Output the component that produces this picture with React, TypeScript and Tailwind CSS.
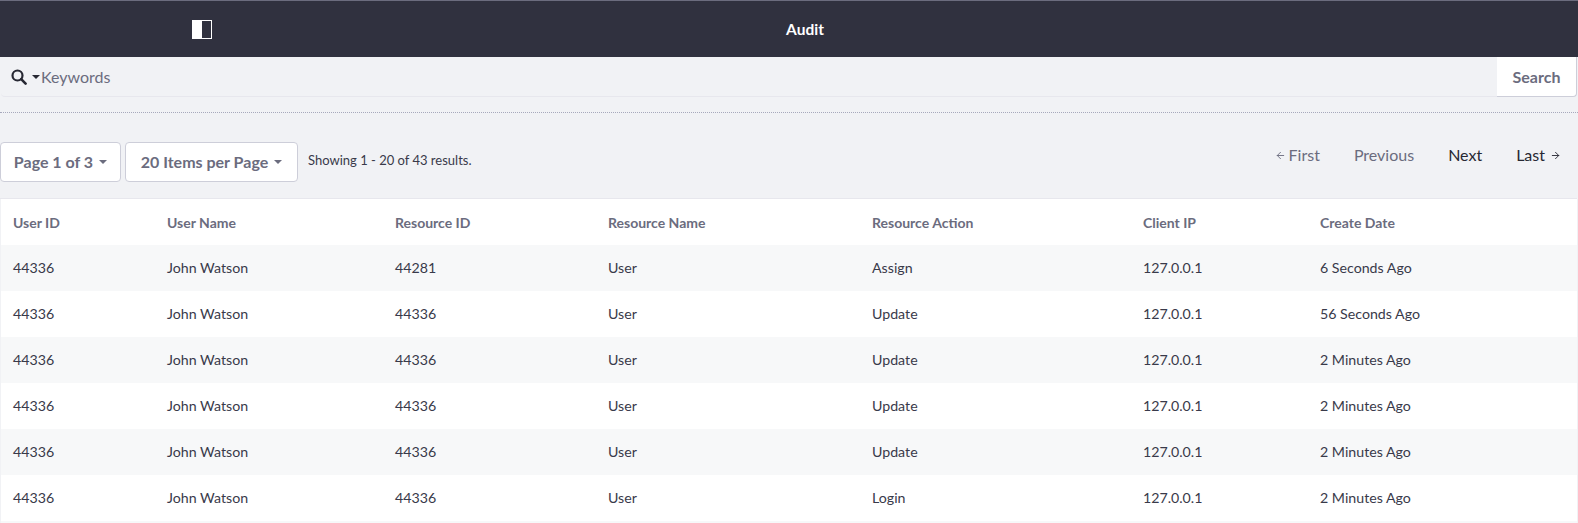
import { ArrowLeft, ArrowRight } from 'lucide-react';

const rows = [
    { resourceId: '44281', action: 'Assign', date: '6 Seconds Ago' },
    { resourceId: '44336', action: 'Update', date: '56 Seconds Ago' },
    { resourceId: '44336', action: 'Update', date: '2 Minutes Ago' },
    { resourceId: '44336', action: 'Update', date: '2 Minutes Ago' },
    { resourceId: '44336', action: 'Update', date: '2 Minutes Ago' },
    { resourceId: '44336', action: 'Login', date: '2 Minutes Ago' },
];

const columns = [
    { label: 'User ID', width: 'w-[154px]' },
    { label: 'User Name', width: 'w-[228px]' },
    { label: 'Resource ID', width: 'w-[213px]' },
    { label: 'Resource Name', width: 'w-[264px]' },
    { label: 'Resource Action', width: 'w-[271px]' },
    { label: 'Client IP', width: 'w-[177px]' },
    { label: 'Create Date', width: 'w-auto' },
];

function Caret() {
    return <span className="inline-block h-0 w-0 border-x-[4px] border-t-[4px] border-x-transparent border-t-current" />;
}

function DropdownButton({ label, width }: { label: string; width: string }) {
    return (
        <button className={`flex h-10 items-center justify-center gap-[6px] rounded border border-[#cdced9] bg-white text-[16px] font-bold text-[#6b6c7e] ${width}`}>
            {label}
            <Caret />
        </button>
    );
}

export default function App() {
    return (
        <div className="h-[523px] overflow-hidden bg-[#f1f2f5] font-['Lato',sans-serif] text-[#393a4a]">
            <header className="relative flex h-[57px] items-center justify-center border-t border-[#6b6c7e] bg-[#30313f]">
                <span className="absolute left-[192px] top-[19px] flex h-[19px] w-[20px] border border-white">
                    <span className="h-full w-[9px] bg-white" />
                </span>
                <h1 className="pl-[32px] pt-[1px] text-[15.5px] font-bold text-white">Audit</h1>
            </header>

            <div className="mx-px flex h-10 items-center rounded-b border-b border-[#e7e7ed]">
                <div className="flex items-center gap-[5px] pl-[10px] text-[#272833]">
                    <svg width="16" height="16" viewBox="0 0 16 16" fill="none" stroke="currentColor" aria-hidden="true">
                        <circle cx="6.5" cy="6.5" r="5" strokeWidth="2.2" />
                        <path d="M10.2 10.2 14.6 14.6" strokeWidth="2.6" strokeLinecap="round" />
                    </svg>
                    <Caret />
                </div>
                <input
                    readOnly
                    placeholder="Keywords"
                    className="h-full min-w-0 flex-1 bg-transparent pl-[1px] text-[16px] outline-none placeholder:text-[#6b6c7e]"
                />
                <button className="h-10 w-[80px] rounded-br border-b border-r border-[#cdced9] bg-white pt-[1px] text-[16px] font-bold text-[#6b6c7e]">
                    Search
                </button>
            </div>

            <div className="mt-[15px] border-t border-dotted border-[#a7a9bc]" />

            <div className="mr-px flex h-[86px] items-start justify-between border-b border-[#e7e7ed]">
                <div className="flex items-center gap-1 pt-[29px]">
                    <DropdownButton label="Page 1 of 3" width="w-[121px]" />
                    <DropdownButton label="20 Items per Page" width="w-[173px]" />
                    <span className="mb-[2px] ml-[6px] text-[13px] text-[#393a4a]">Showing 1 - 20 of 43 results.</span>
                </div>
                <nav className="flex items-center gap-[34px] pr-[16px] pt-[30px] text-[16px]">
                    <span className="flex items-center gap-[3px] text-[#6b6c7e]"><ArrowLeft size={11} />First</span>
                    <span className="text-[#6b6c7e]">Previous</span>
                    <span className="text-[#272833]">Next</span>
                    <span className="flex items-center gap-[5px] text-[#272833]">Last<ArrowRight size={11} /></span>
                </nav>
            </div>

            <table className="ml-px w-[1576px] table-fixed border-collapse bg-white text-[14.2px]">
                <thead>
                    <tr className="h-[46px]">
                        {columns.map((col) => (
                            <th key={col.label} className={`pl-3 text-left text-[14px] font-bold text-[#6b6c7e] ${col.width}`}>
                                {col.label}
                            </th>
                        ))}
                    </tr>
                </thead>
                <tbody>
                    {rows.map((row, i) => (
                        <tr key={i} className="h-[46px] odd:bg-[#f7f8f9]">
                            <td className="pl-3">44336</td>
                            <td className="pl-3">John Watson</td>
                            <td className="pl-3">{row.resourceId}</td>
                            <td className="pl-3">User</td>
                            <td className="pl-3">{row.action}</td>
                            <td className="pl-3">127.0.0.1</td>
                            <td className="pl-3">{row.date}</td>
                        </tr>
                    ))}
                </tbody>
            </table>
            <div className="ml-px h-[2px] w-[1576px] bg-[#f7f8f9]" />
        </div>
    );
}
